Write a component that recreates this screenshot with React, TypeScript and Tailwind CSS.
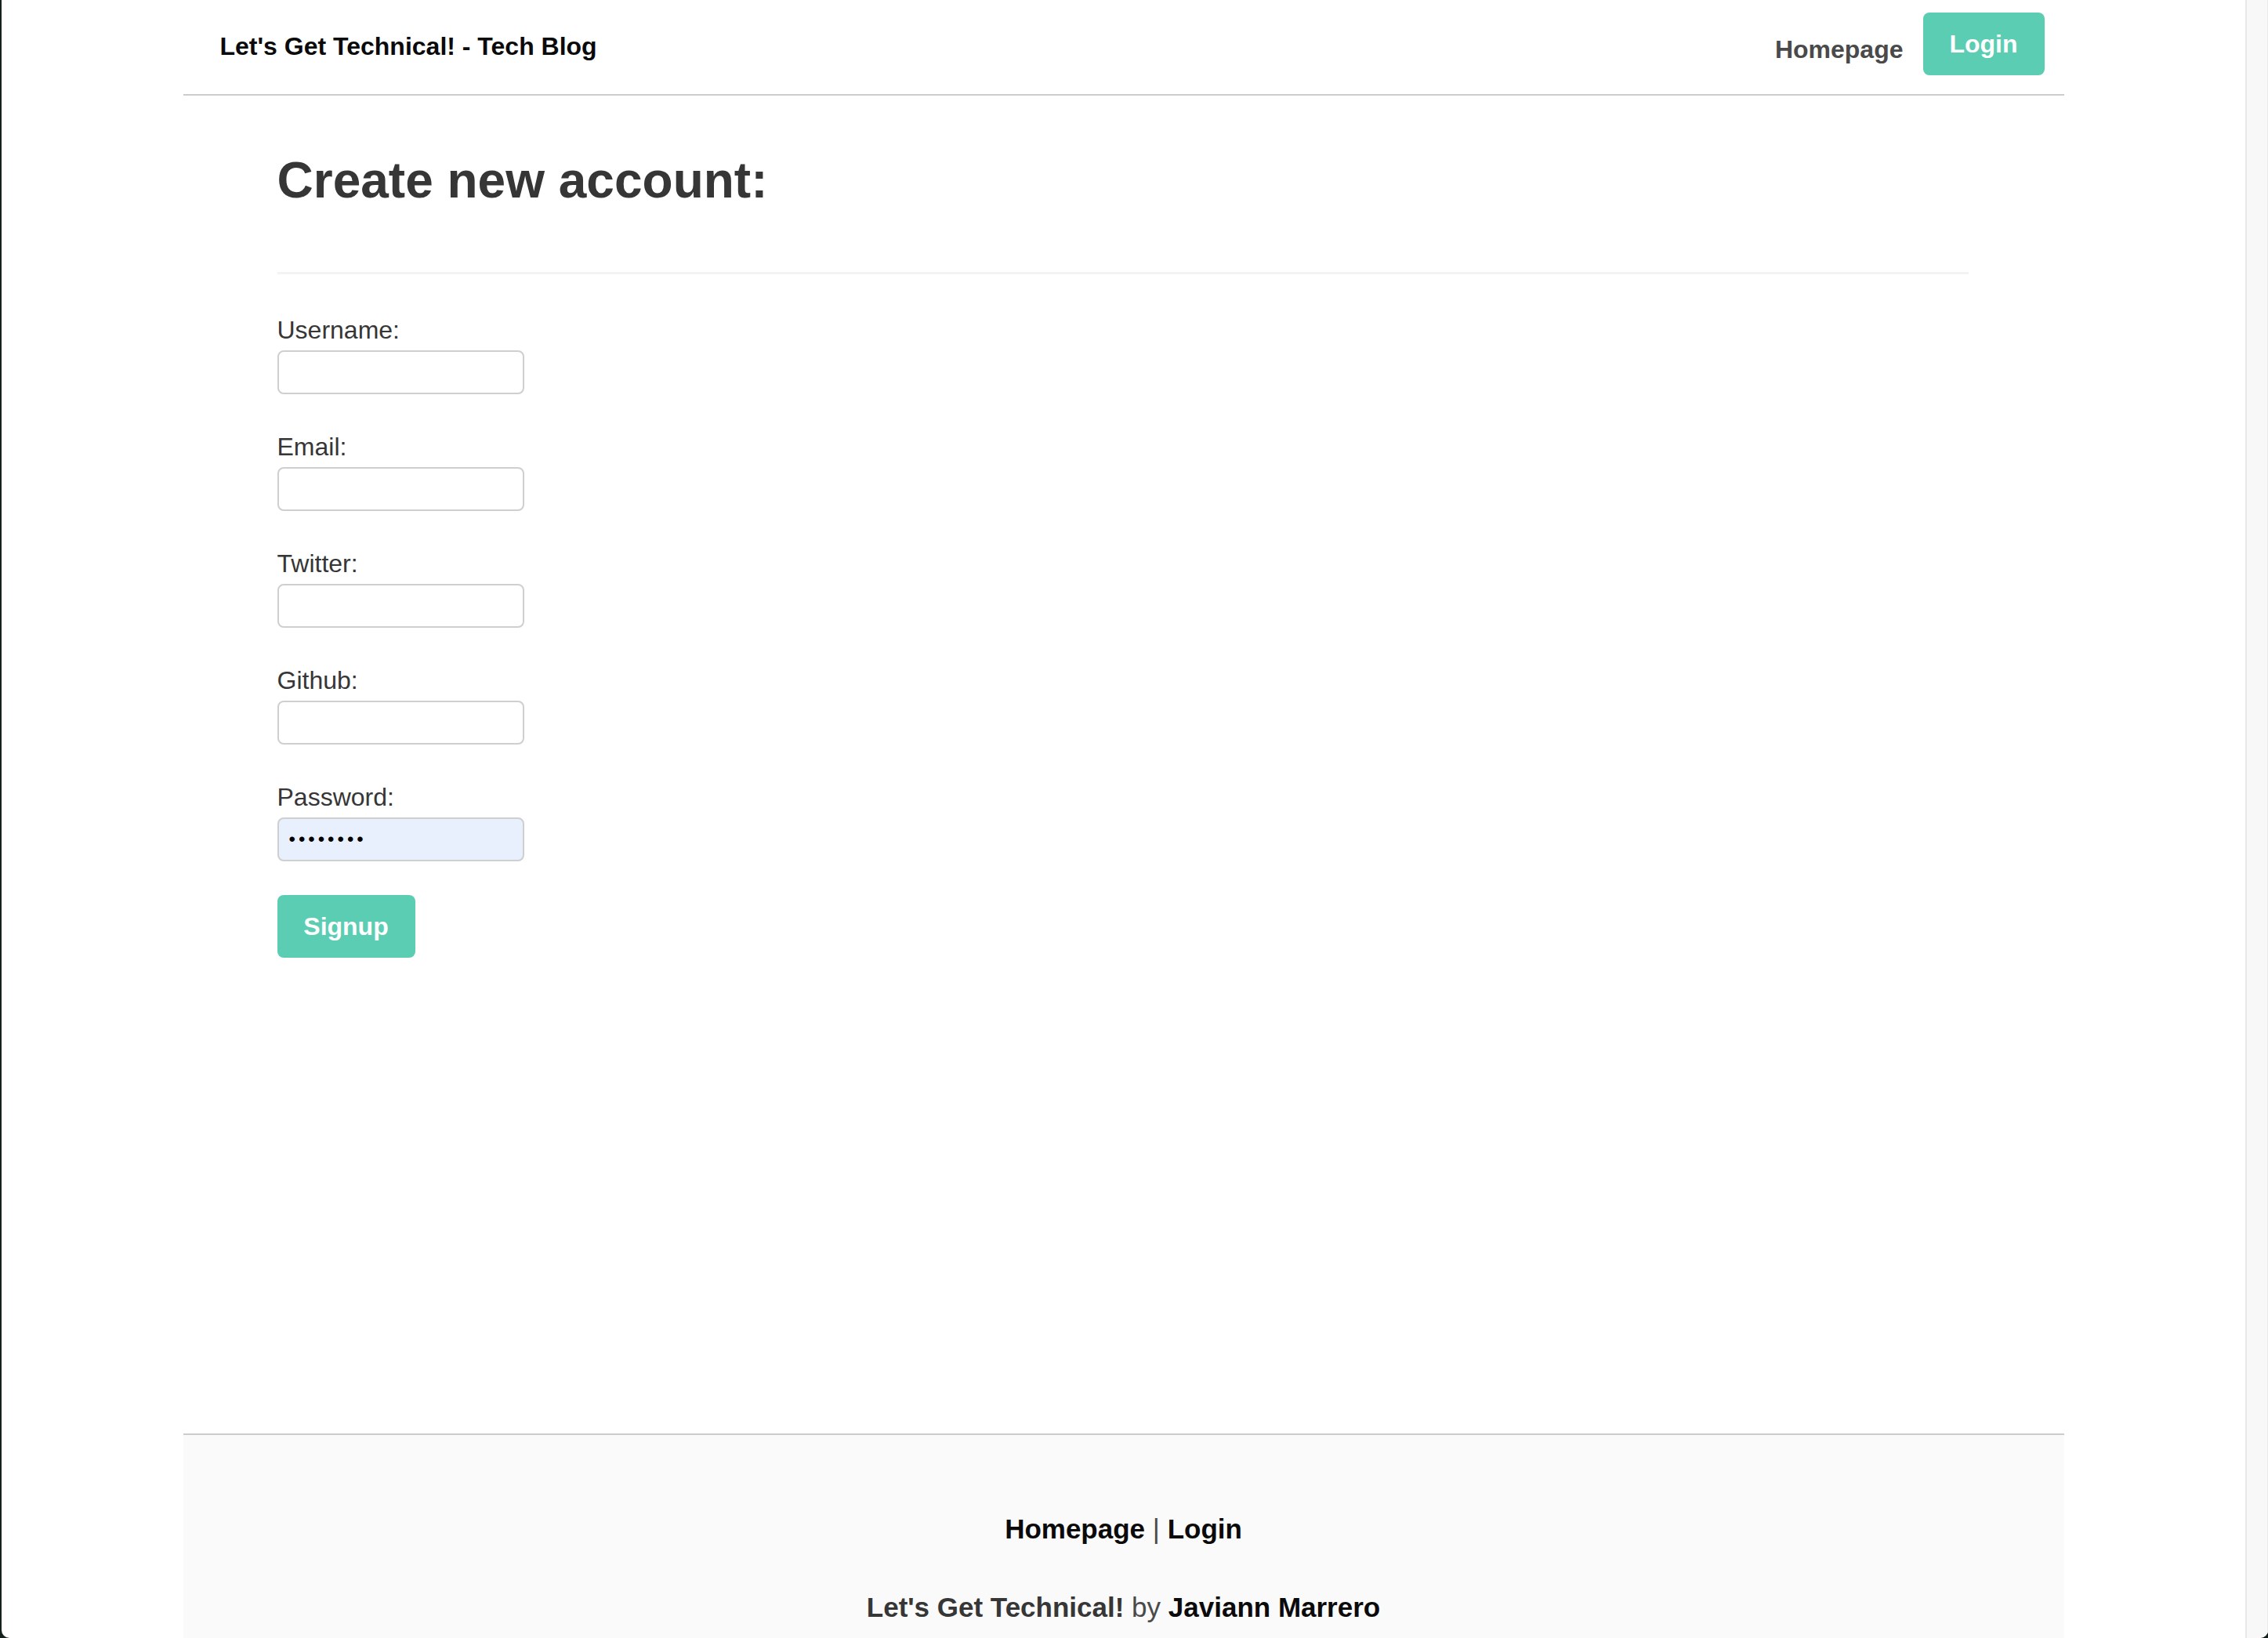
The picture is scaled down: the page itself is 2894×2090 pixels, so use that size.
import React from "react";

const font = { fontFamily: '"Liberation Sans", Arial, Helvetica, sans-serif' };

const fields = [
  { label: "Username:", type: "text" },
  { label: "Email:", type: "email" },
  { label: "Twitter:", type: "text" },
  { label: "Github:", type: "text" },
];

function Field({ label, type }: { label: string; type: string }) {
  return (
    <div className="mb-[44px]">
      <label className="block text-[32px] leading-[46px] text-[#363636]">
        {label}
      </label>
      <input
        type={type}
        className="mt-[3px] block w-[315px] h-[56px] rounded-[8px] border-2 border-[#cfcfcf] bg-white px-[13px] outline-none"
      />
    </div>
  );
}

export default function App() {
  return (
    <div
      className="w-[2894px] h-[2090px] bg-[#14201c] pl-[2px] overflow-hidden"
      style={font}
    >
      <div className="flex h-full rounded-b-[10px] overflow-hidden bg-white">
        <div className="flex-1 flex flex-col">
          <div className="w-[2400px] mx-auto flex flex-col flex-1">
            {/* Navbar */}
            <header className="h-[122px] border-b-2 border-[#cccccc] flex items-start justify-between pl-[47px] pr-[25px]">
              <a className="mt-[39px] text-[32px] leading-[40px] font-bold text-[#0a0a0a]">
                Let's Get Technical! - Tech Blog
              </a>
              <nav className="flex items-start gap-[25px]">
                <a className="mt-[43px] text-[32px] leading-[40px] font-bold text-[#4a4a4a]">
                  Homepage
                </a>
                <button className="mt-[16px] h-[80px] w-[155px] rounded-[8px] bg-[#5bcdb3] text-white text-[32px] leading-[40px] font-bold">
                  Login
                </button>
              </nav>
            </header>

            {/* Signup form */}
            <main className="h-[1707px] pl-[120px] pr-[122px]">
              <h1 className="mt-[73px] text-[64px] leading-[71px] font-bold text-[#363636]">
                Create new account:
              </h1>
              <div className="mt-[81px] h-[3px] bg-[#f3f3f3]" />
              <form className="mt-[48px]">
                {fields.map((f) => (
                  <Field key={f.label} label={f.label} type={f.type} />
                ))}
                <div>
                  <label className="block text-[32px] leading-[46px] text-[#363636]">
                    Password:
                  </label>
                  <input
                    type="text"
                    defaultValue="••••••••"
                    readOnly
                    className="mt-[3px] block w-[315px] h-[56px] rounded-[8px] border-2 border-[#cfcfcf] bg-[#e8f0fe] px-[13px] text-[24px] tracking-[4px] text-black outline-none"
                  />
                </div>
                <button
                  type="button"
                  className="mt-[43px] h-[80px] w-[176px] rounded-[8px] bg-[#5bcdb3] text-white text-[32px] leading-[40px] font-bold"
                >
                  Signup
                </button>
              </form>
            </main>

            {/* Footer */}
            <footer className="border-t-2 border-[#cccccc] bg-[#fafafa] pt-[94px] pb-[120px] text-center text-[35px] leading-[52px]">
              <p>
                <a className="font-bold text-[#0a0a0a]">Homepage</a>{" "}
                <span className="text-[#4a4a4a]">|</span>{" "}
                <a className="font-bold text-[#0a0a0a]">Login</a>
              </p>
              <p className="mt-[48px] text-[#4a4a4a]">
                <strong className="text-[#363636]">Let's Get Technical!</strong>{" "}
                by <a className="font-bold text-[#0a0a0a]">Javiann Marrero</a>
              </p>
            </footer>
          </div>
        </div>
        {/* scrollbar track */}
        <div className="w-[29px] bg-[#f8f8f8] border-l-2 border-[#e8e8e8] border-r border-r-[#ececec]" />
      </div>
    </div>
  );
}
